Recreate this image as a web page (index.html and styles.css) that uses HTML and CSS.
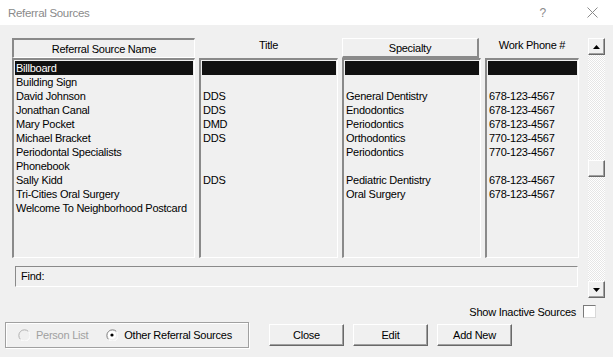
FILE: index.html
```html
<!DOCTYPE html>
<html lang="en">
<head>
    <meta charset="UTF-8">
    <title>Referral Sources</title>
    <link rel="stylesheet" href="styles.css">
</head>
<body>
    <div class="titlebar">
        <span class="title">Referral Sources</span>
        <span class="help">?</span>
        <svg class="close-x" width="11" height="11" viewBox="0 0 11 11">
            <path d="M0.5 0.5 L10.5 10.5 M10.5 0.5 L0.5 10.5" stroke="#8a8a8a" stroke-width="1" fill="none"/>
        </svg>
    </div>
    <div class="dialog">
        <div class="main">
            <div class="left">
                <div class="grid">
                    <div class="hdr hdr-pressed">Referral Source Name</div>
                    <div class="hdr hdr-label">Title</div>
                    <div class="hdr hdr-raised">Specialty</div>
                    <div class="hdr hdr-label">Work Phone #</div>

                    <div class="list">
                        <div class="row selected">Billboard</div>
                        <div class="row">Building Sign</div>
                        <div class="row">David Johnson</div>
                        <div class="row">Jonathan Canal</div>
                        <div class="row">Mary Pocket</div>
                        <div class="row">Michael Bracket</div>
                        <div class="row">Periodontal Specialists</div>
                        <div class="row">Phonebook</div>
                        <div class="row">Sally Kidd</div>
                        <div class="row">Tri-Cities Oral Surgery</div>
                        <div class="row">Welcome To Neighborhood Postcard</div>
                    </div>
                    <div class="list">
                        <div class="row selected"></div>
                        <div class="row"></div>
                        <div class="row">DDS</div>
                        <div class="row">DDS</div>
                        <div class="row">DMD</div>
                        <div class="row">DDS</div>
                        <div class="row"></div>
                        <div class="row"></div>
                        <div class="row">DDS</div>
                        <div class="row"></div>
                        <div class="row"></div>
                    </div>
                    <div class="list">
                        <div class="row selected"></div>
                        <div class="row"></div>
                        <div class="row">General Dentistry</div>
                        <div class="row">Endodontics</div>
                        <div class="row">Periodontics</div>
                        <div class="row">Orthodontics</div>
                        <div class="row">Periodontics</div>
                        <div class="row"></div>
                        <div class="row">Pediatric Dentistry</div>
                        <div class="row">Oral Surgery</div>
                        <div class="row"></div>
                    </div>
                    <div class="list">
                        <div class="row selected"></div>
                        <div class="row"></div>
                        <div class="row">678-123-4567</div>
                        <div class="row">678-123-4567</div>
                        <div class="row">678-123-4567</div>
                        <div class="row">770-123-4567</div>
                        <div class="row">770-123-4567</div>
                        <div class="row"></div>
                        <div class="row">678-123-4567</div>
                        <div class="row">678-123-4567</div>
                        <div class="row"></div>
                    </div>
                </div>
                <div class="find">Find:</div>
            </div>
            <div class="scrollbar">
                <div class="sb-btn">
                    <svg width="7" height="4" viewBox="0 0 7 4"><path d="M3.5 0 L7 4 L0 4 Z" fill="#000"/></svg>
                </div>
                <div class="sb-gap"></div>
                <div class="sb-btn"></div>
                <div class="sb-fill"></div>
                <div class="sb-btn">
                    <svg width="7" height="4" viewBox="0 0 7 4"><path d="M0 0 L7 0 L3.5 4 Z" fill="#000"/></svg>
                </div>
            </div>
        </div>
        <div class="inactive-row">
            <span>Show Inactive Sources</span>
            <span class="checkbox"></span>
        </div>
        <div class="bottom">
            <div class="radio-group">
                <label class="radio disabled">
                    <svg width="12" height="12" viewBox="0 0 12 12">
                        <path d="M10.5 2.5 A5 5 0 1 0 2.5 10.5" stroke="#b0b0b0" fill="none"/>
                        <path d="M2.5 10.5 A5 5 0 0 0 10.5 2.5" stroke="#fff" fill="none"/>
                        <circle cx="6" cy="6" r="4" fill="#f0f0f0"/>
                    </svg>
                    Person List
                </label>
                <label class="radio">
                    <svg width="12" height="12" viewBox="0 0 12 12">
                        <path d="M10.5 2.5 A5 5 0 1 0 2.5 10.5" stroke="#808080" fill="none"/>
                        <path d="M2.5 10.5 A5 5 0 0 0 10.5 2.5" stroke="#fff" fill="none"/>
                        <circle cx="6" cy="6" r="4" fill="#fff"/>
                        <circle cx="6" cy="6" r="1.6" fill="#000"/>
                    </svg>
                    Other Referral Sources
                </label>
            </div>
            <button class="btn">Close</button>
            <button class="btn">Edit</button>
            <button class="btn">Add New</button>
        </div>
    </div>
</body>
</html>
```

FILE: styles.css
```css
body {
    margin: 0;
    width: 613px;
    height: 357px;
    overflow: hidden;
    font-family: "Liberation Sans", Arial, sans-serif;
    font-size: 11px;
    letter-spacing: -0.25px;
    color: #000;
    background: #f0f0f0;
}

.titlebar {
    height: 25px;
    background: #fff;
    display: flex;
    align-items: center;
    padding-left: 8px;
    color: #8a8a8a;
}
.title {
    flex: 1;
    font-size: 11.5px;
    letter-spacing: -0.3px;
}
.help {
    font-size: 12px;
    margin-right: 41px;
}
.close-x {
    margin-right: 15px;
}

.dialog {
    height: 332px;
    background: #f0f0f0;
}

.main {
    display: flex;
    padding-top: 13px;
}
.left {
    margin-left: 12px;
}

.grid {
    display: grid;
    grid-template-columns: 183px 139px 139px 94px;
    grid-template-rows: 20px 200px;
    column-gap: 4px;
}

.hdr {
    box-sizing: border-box;
    display: flex;
    justify-content: center;
    align-items: center;
}
.hdr-pressed {
    border-style: solid;
    border-width: 2px 1px 1px 2px;
    border-color: #8a8a8a #fff #fff #8a8a8a;
    padding-top: 1px;
}
.hdr-raised {
    border-style: solid;
    border-width: 1px 2px 2px 1px;
    border-color: #fff #8a8a8a #8a8a8a #fff;
    margin-right: 2px;
    padding-top: 1px;
}
.hdr-label {
    align-items: flex-start;
    padding-top: 1px;
}

.list {
    box-sizing: border-box;
    border-style: solid;
    border-width: 2px 1px 1px 2px;
    border-color: #8a8a8a #fff #fff #8a8a8a;
    padding: 1px;
}
.row {
    height: 14px;
    line-height: 14px;
    padding-left: 1px;
    white-space: nowrap;
    overflow: hidden;
}
.row.selected {
    background: #111;
    color: #fff;
}

.find {
    box-sizing: border-box;
    margin: 8px 0 0 3px;
    width: 563px;
    height: 21px;
    border: 1px solid;
    border-color: #8a8a8a #fff #fff #8a8a8a;
    padding: 3px 0 0 5px;
}

.scrollbar {
    margin-left: 9px;
    width: 17px;
    height: 260px;
    display: flex;
    flex-direction: column;
    background: repeating-conic-gradient(#fff 0 25%, #e6e6e6 0 50%) 0 0 / 2px 2px;
}
.sb-btn {
    box-sizing: border-box;
    height: 17px;
    background: #f0f0f0;
    border: 1px solid;
    border-color: #fff #696969 #696969 #fff;
    box-shadow: inset -1px -1px #a0a0a0;
    display: flex;
    justify-content: center;
    align-items: center;
}
.sb-gap {
    height: 105px;
}
.sb-fill {
    flex: 1;
}

.inactive-row {
    display: flex;
    justify-content: flex-end;
    align-items: center;
    gap: 7px;
    margin-top: 7px;
    padding-right: 17px;
    height: 13px;
}
.checkbox {
    box-sizing: border-box;
    width: 13px;
    height: 13px;
    background: #fff;
    border: 1px solid;
    border-color: #7a7a7a #d8d8d8 #d8d8d8 #7a7a7a;
}

.bottom {
    display: flex;
    align-items: center;
    margin-top: 4px;
    padding-left: 5px;
}
.radio-group {
    box-sizing: border-box;
    width: 244px;
    height: 26px;
    border: 1px solid #a0a0a0;
    box-shadow: inset 1px 1px #fff, 1px 1px #fff;
    display: flex;
    align-items: center;
    padding-left: 12px;
    gap: 18px;
}
.radio {
    display: flex;
    align-items: center;
    gap: 6px;
}
.radio.disabled {
    color: #a0a0a0;
}

.btn {
    box-sizing: border-box;
    width: 75px;
    height: 22px;
    margin-left: 9px;
    font-family: "Liberation Sans", Arial, sans-serif;
    font-size: 11px;
    letter-spacing: -0.25px;
    color: #000;
    background: #f0f0f0;
    border: 1px solid;
    border-color: #fff #696969 #696969 #fff;
    box-shadow: inset -1px -1px #a0a0a0;
    padding: 0;
}
.radio-group + .btn {
    margin-left: 20px;
}
```
